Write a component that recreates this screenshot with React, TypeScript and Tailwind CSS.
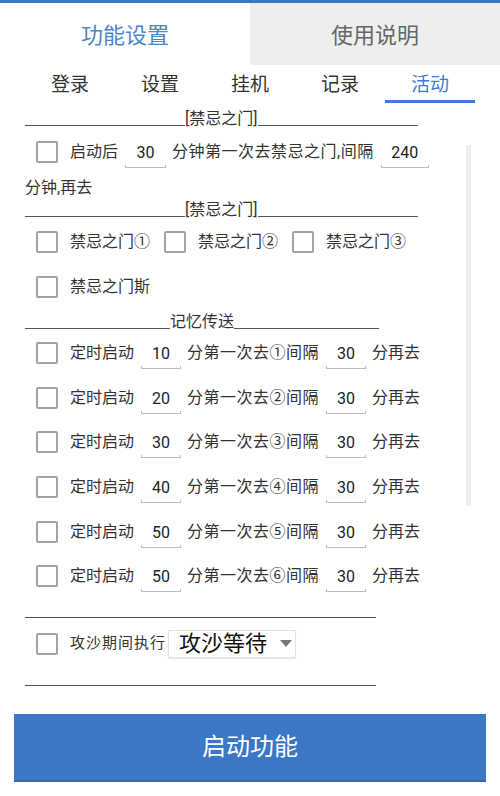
import React from "react"

const FONT = "font-['Roboto','Noto_Sans_CJK_SC',sans-serif]"

const Box = () => <div className="w-[22px] h-[22px] shrink-0 border-2 border-[#a3a3a3] rounded-[2px]" />

const Field = ({ value, w }: { value: string; w: string }) => (
  <div className={`${w} h-[32px] shrink-0 flex flex-col`}>
    <div className="flex-1 pt-[5px] flex items-center justify-center text-[16px] text-[#222]">{value}</div>
    <div className="h-[5px] border-x border-b border-[#bdbdbd]" />
  </div>
)

const Rule = ({ left, label, right }: { left: string; label: string; right: string }) => (
  <div className="flex items-end h-[18px]">
    <div className={`${left} h-px bg-[#555] mb-[2px]`} />
    <span className="text-[16px] leading-[18px] text-[#333] whitespace-nowrap">{label}</span>
    <div className={`${right} h-px bg-[#555] mb-[2px]`} />
  </div>
)

const timers = [
  { start: "10", mark: "①" },
  { start: "20", mark: "②" },
  { start: "30", mark: "③" },
  { start: "40", mark: "④" },
  { start: "50", mark: "⑤" },
  { start: "50", mark: "⑥" },
]

export default function App() {
  return (
    <div className={`w-[500px] h-[796px] bg-white relative overflow-hidden ${FONT}`}>
      <div className="h-[3px] bg-[#3b78c4]" />

      {/* main tabs */}
      <div className="flex h-[62px]">
        <div className="flex-1 flex items-center justify-center pt-[2px] text-[22px] text-[#4a86c9]">功能设置</div>
        <div className="flex-1 flex items-center justify-center pt-[2px] text-[22px] text-[#666] bg-[#eeeeee]">使用说明</div>
      </div>

      {/* sub tabs */}
      <div className="flex px-[25px] pt-[6px] pb-px">
        {["登录", "设置", "挂机", "记录", "活动"].map((t, i) => (
          <div key={t} className="flex-1 flex flex-col">
            <div className={`h-[29px] flex items-center justify-center text-[19px] ${i === 4 ? "text-[#3b7ddd]" : "text-[#333]"}`}>
              {t}
            </div>
            <div className={`h-[3px] ${i === 4 ? "bg-[#3b7ddd]" : ""}`} />
          </div>
        ))}
      </div>

      <div className="pl-[25px] text-[#333] text-[16px]">
        <div className="mt-[6px]">
          <Rule left="w-[160px]" label="[禁忌之门]" right="w-[160px]" />
        </div>

        <div className="flex items-center h-[32px] mt-[8px] ml-[11px]">
          <Box />
          <span className="ml-[12px] whitespace-nowrap">启动后</span>
          <div className="ml-[7px]"><Field value="30" w="w-[41px]" /></div>
          <span className="ml-[6px] whitespace-nowrap tracking-[0.5px]">分钟第一次去禁忌之门,间隔</span>
          <div className="ml-[7px]"><Field value="240" w="w-[48px]" /></div>
        </div>
        <div className="mt-[10px] leading-[20px]">分钟,再去</div>

        <div className="mt-[3px]">
          <Rule left="w-[160px]" label="[禁忌之门]" right="w-[160px]" />
        </div>

        <div className="flex items-center h-[45px] ml-[11px]">
          {["禁忌之门①", "禁忌之门②", "禁忌之门③"].map(t => (
            <div key={t} className="w-[128px] flex items-center">
              <Box />
              <span className="ml-[12px] whitespace-nowrap">{t}</span>
            </div>
          ))}
        </div>
        <div className="flex items-center h-[45px] ml-[11px]">
          <Box />
          <span className="ml-[12px]">禁忌之门斯</span>
        </div>

        <div className="mt-[4px]">
          <Rule left="w-[145px]" label="记忆传送" right="w-[145px]" />
        </div>

        {timers.map((r, i) => (
          <div key={i} className="flex items-center h-[44.6px] ml-[11px]">
            <Box />
            <span className="ml-[12px] whitespace-nowrap">定时启动</span>
            <div className="ml-[7px]"><Field value={r.start} w="w-[40px]" /></div>
            <span className="ml-[6px] whitespace-nowrap tracking-[0.5px]">分第一次去{r.mark}间隔</span>
            <div className="ml-[7px]"><Field value="30" w="w-[40px]" /></div>
            <span className="ml-[6px] whitespace-nowrap">分再去</span>
          </div>
        ))}

        <div className="mt-[18px] w-[351px] h-px bg-[#555]" />

        <div className="flex items-center h-[30px] mt-[11px] ml-[11px]">
          <Box />
          <span className="ml-[12px] text-[15px] tracking-[1px] whitespace-nowrap">攻沙期间执行</span>
          <div className="ml-[2px] w-[128px] h-[28px] border border-[#e2e2e2] shadow-[0_1px_1px_rgba(0,0,0,0.08)] flex items-center pl-[10px] pr-[3px]">
            <span className="flex-1 text-[22px] text-[#111] leading-none">攻沙等待</span>
            <svg width="12" height="7" viewBox="0 0 12 7">
              <path d="M0 0h12L6 7z" fill="#777" />
            </svg>
          </div>
        </div>

        <div className="mt-[26px] w-[351px] h-px bg-[#555]" />
      </div>

      <button className="mt-[28px] mx-[14px] w-[472px] h-[68px] bg-[#3b78c4] border-b-2 border-[#3569ab] text-white text-[24px]">
        启动功能
      </button>

      {/* scrollbar */}
      <div className="absolute left-[466px] top-[145px] w-[5px] h-[361px] bg-[#eeeeee]" />
    </div>
  )
}
